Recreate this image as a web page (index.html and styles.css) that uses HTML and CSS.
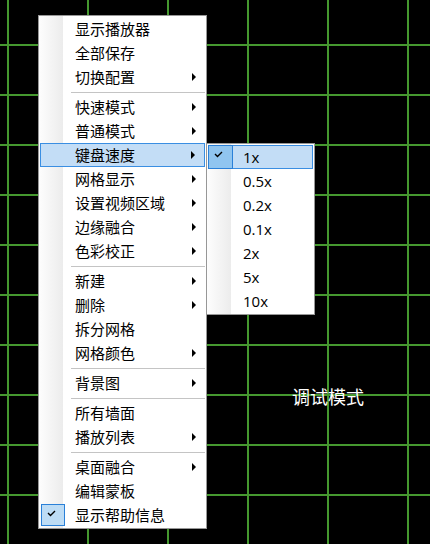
FILE: index.html
```html
<!DOCTYPE html>
<html lang="zh-CN">
<head>
<meta charset="utf-8">
<title>调试模式</title>
<link rel="stylesheet" href="styles.css">
</head>
<body>
<div class="mode">调试模式</div>

<div class="menu main-menu">
  <div class="item">显示播放器</div>
  <div class="item">全部保存</div>
  <div class="item">切换配置<span class="arrow"></span></div>
  <div class="sep"></div>
  <div class="item">快速模式<span class="arrow"></span></div>
  <div class="item">普通模式<span class="arrow"></span></div>
  <div class="item active">键盘速度<span class="arrow"></span></div>
  <div class="item">网格显示<span class="arrow"></span></div>
  <div class="item">设置视频区域<span class="arrow"></span></div>
  <div class="item">边缘融合<span class="arrow"></span></div>
  <div class="item">色彩校正<span class="arrow"></span></div>
  <div class="sep"></div>
  <div class="item">新建<span class="arrow"></span></div>
  <div class="item">删除<span class="arrow"></span></div>
  <div class="item">拆分网格</div>
  <div class="item">网格颜色<span class="arrow"></span></div>
  <div class="sep"></div>
  <div class="item">背景图<span class="arrow"></span></div>
  <div class="sep"></div>
  <div class="item">所有墙面</div>
  <div class="item">播放列表<span class="arrow"></span></div>
  <div class="sep"></div>
  <div class="item">桌面融合<span class="arrow"></span></div>
  <div class="item">编辑蒙板</div>
  <div class="item checked">
    <span class="check"><svg width="22" height="20" viewBox="0 0 22 20"><polyline points="6,8 8.5,10.5 13,6" fill="none" stroke="#000" stroke-width="1.4"/></svg></span>
    显示帮助信息
  </div>
</div>

<div class="menu sub-menu">
  <div class="item active checked">
    <span class="check"><svg width="23" height="22" viewBox="0 0 23 22"><polyline points="6,8 8.5,10.5 13,6" fill="none" stroke="#000" stroke-width="1.4"/></svg></span>
    1x
  </div>
  <div class="item">0.5x</div>
  <div class="item">0.2x</div>
  <div class="item">0.1x</div>
  <div class="item">2x</div>
  <div class="item">5x</div>
  <div class="item">10x</div>
</div>
</body>
</html>
```

FILE: styles.css
```css
html, body {
  margin: 0;
  padding: 0;
}

body {
  width: 430px;
  height: 544px;
  overflow: hidden;
  position: relative;
  background-color: #000;
  background-image:
    linear-gradient(to right, #45982f 2px, transparent 2px),
    linear-gradient(to bottom, #45982f 2px, transparent 2px);
  background-size: 80px 50px;
  background-position: 7px 44px;
  font-family: "Open Sans", "Noto Sans CJK SC", sans-serif;
}

.mode {
  position: absolute;
  left: 328px;
  top: 396px;
  transform: translate(-50%, -50%);
  color: #fff;
  font-family: "Noto Sans CJK SC", sans-serif;
  font-size: 18px;
  line-height: 1;
  white-space: nowrap;
}

.menu {
  position: absolute;
  box-sizing: border-box;
  border: 1px solid #979797;
  padding: 1px 0;
  background:
    linear-gradient(to right, #fdfdfd, #ececec) 0 0 / 24px 100% no-repeat,
    #fff;
  color: #000;
  font-size: 15px;
}

.main-menu {
  left: 38px;
  top: 15px;
  width: 169px;
}

.sub-menu {
  left: 206px;
  top: 143px;
  width: 109px;
}

.item {
  position: relative;
  display: flex;
  align-items: center;
  box-sizing: border-box;
  height: 24px;
  line-height: 24px;
  padding-left: 36px;
  padding-right: 10px;
  white-space: nowrap;
}

.item.active {
  margin: 0 1px;
  padding-left: 34px;
  padding-right: 9px;
  background: #c3ddf6;
  border: 1px solid #3a8ee2;
}

.arrow {
  margin-left: auto;
  width: 0;
  height: 0;
  border-left: 4px solid #000;
  border-top: 4px solid transparent;
  border-bottom: 4px solid transparent;
}

.sep {
  box-sizing: border-box;
  height: 6px;
  padding: 3px 1px 0 32px;
}

.sep::after {
  content: "";
  display: block;
  height: 1px;
  background: #c4c4c4;
}

.check {
  position: absolute;
  left: 2px;
  top: 1px;
  width: 24px;
  height: 22px;
  box-sizing: border-box;
  border: 1px solid #2a80d8;
  background: #bddcf5;
  display: flex;
}

.item.active .check {
  left: -1px;
  top: -1px;
  width: 25px;
  height: 24px;
  background: #90c5f0;
}
```
